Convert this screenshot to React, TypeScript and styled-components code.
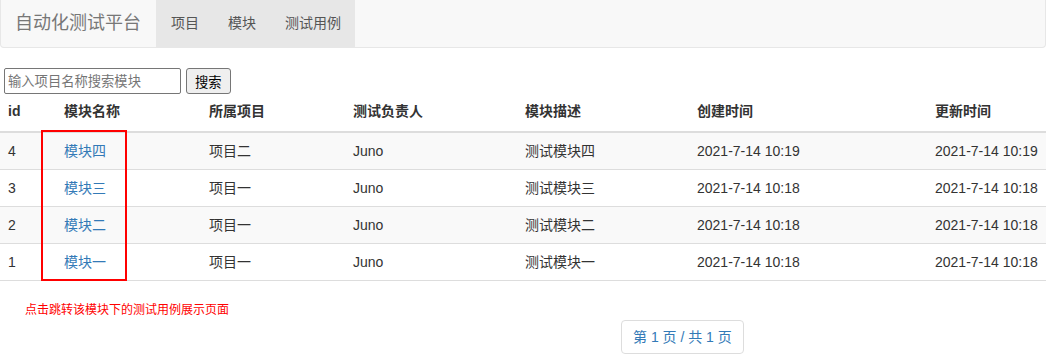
import React from "react";
import styled, { createGlobalStyle } from "styled-components";

const GlobalStyle = createGlobalStyle`
  body {
    margin: 0;
    background: #fff;
    color: #333;
    font-family: "Liberation Sans", "Noto Sans CJK SC", sans-serif;
    font-size: 14px;
    line-height: 1.42857;
  }
`;

const Navbar = styled.nav`
  display: flex;
  height: 47px;
  background: #f8f8f8;
  border: 1px solid #e7e7e7;
  border-top: none;
  border-radius: 0 0 4px 4px;
  margin-bottom: 20px;
`;

const Brand = styled.div`
  padding: 0 15px 0 14px;
  line-height: 46px;
  font-size: 18px;
  color: #777;
`;

const NavList = styled.ul`
  display: flex;
  margin: 0;
  padding: 0;
  list-style: none;
  background: #e7e7e7;
`;

const NavItem = styled.li`
  padding: 0 14px 0 15px;
  line-height: 46px;
  color: #555;
`;

const SearchBar = styled.form`
  display: flex;
  gap: 5px;
  padding-left: 4px;
  margin-bottom: 3px;
`;

const SearchInput = styled.input`
  width: 177px;
  height: 26px;
  box-sizing: border-box;
  border: 1px solid #767676;
  border-radius: 2px;
  padding: 0 3px;
  font-family: inherit;
  font-size: 13.3px;
  &::placeholder {
    color: #757575;
  }
`;

const SearchButton = styled.button`
  height: 26px;
  padding: 0 8px;
  border: 1px solid #767676;
  border-radius: 3px;
  background: #efefef;
  color: #000;
  font-family: inherit;
  font-size: 13.3px;
`;

const TableWrap = styled.div`
  position: relative;
`;

const Table = styled.table`
  width: 100%;
  table-layout: fixed;
  border-collapse: collapse;
  border-spacing: 0;
`;

const Th = styled.th<{ $w: number }>`
  width: ${(p) => p.$w - 16}px;
  padding: 4px 8px 10px;
  text-align: left;
  font-weight: bold;
  border-bottom: 2px solid #ddd;
  line-height: 20px;
`;

const Row = styled.tr`
  &:nth-child(odd) {
    background: #f9f9f9;
  }
`;

const Td = styled.td`
  padding: 8px;
  line-height: 20px;
  border-bottom: 1px solid #ddd;
  white-space: nowrap;
`;

const ModuleLink = styled.a`
  color: #337ab7;
  text-decoration: none;
`;

const Highlight = styled.div`
  position: absolute;
  left: 41px;
  top: 33px;
  width: 82px;
  height: 147px;
  border: 2px solid #ff0000;
  pointer-events: none;
`;

const Note = styled.p`
  margin: 21px 0 0 25px;
  font-size: 12px;
  color: #ff0000;
  line-height: 17px;
`;

const Pager = styled.div`
  width: fit-content;
  margin: 1px 0 0 621px;
  padding: 6px 11px;
  border: 1px solid #ddd;
  border-radius: 4px;
  color: #337ab7;
  line-height: 20px;
`;

const columns = [
  { label: "id", w: 56 },
  { label: "模块名称", w: 145 },
  { label: "所属项目", w: 144 },
  { label: "测试负责人", w: 172 },
  { label: "模块描述", w: 172 },
  { label: "创建时间", w: 238 },
  { label: "更新时间", w: 119 },
];

const modules = [
  { id: 4, name: "模块四", project: "项目二", owner: "Juno", desc: "测试模块四", created: "2021-7-14 10:19", updated: "2021-7-14 10:19" },
  { id: 3, name: "模块三", project: "项目一", owner: "Juno", desc: "测试模块三", created: "2021-7-14 10:18", updated: "2021-7-14 10:18" },
  { id: 2, name: "模块二", project: "项目一", owner: "Juno", desc: "测试模块二", created: "2021-7-14 10:18", updated: "2021-7-14 10:18" },
  { id: 1, name: "模块一", project: "项目一", owner: "Juno", desc: "测试模块一", created: "2021-7-14 10:18", updated: "2021-7-14 10:18" },
];

export default function App() {
  return (
    <>
      <GlobalStyle />
      <Navbar>
        <Brand>自动化测试平台</Brand>
        <NavList>
          <NavItem>项目</NavItem>
          <NavItem>模块</NavItem>
          <NavItem>测试用例</NavItem>
        </NavList>
      </Navbar>

      <SearchBar onSubmit={(e) => e.preventDefault()}>
        <SearchInput placeholder="输入项目名称搜索模块" />
        <SearchButton type="submit">搜索</SearchButton>
      </SearchBar>

      <TableWrap>
        <Table>
          <thead>
            <tr>
              {columns.map((c) => (
                <Th key={c.label} $w={c.w}>
                  {c.label}
                </Th>
              ))}
            </tr>
          </thead>
          <tbody>
            {modules.map((m) => (
              <Row key={m.id}>
                <Td>{m.id}</Td>
                <Td>
                  <ModuleLink href="#">{m.name}</ModuleLink>
                </Td>
                <Td>{m.project}</Td>
                <Td>{m.owner}</Td>
                <Td>{m.desc}</Td>
                <Td>{m.created}</Td>
                <Td>{m.updated}</Td>
              </Row>
            ))}
          </tbody>
        </Table>
        <Highlight />
      </TableWrap>

      <Note>点击跳转该模块下的测试用例展示页面</Note>
      <Pager>第 1 页 / 共 1 页</Pager>
    </>
  );
}
